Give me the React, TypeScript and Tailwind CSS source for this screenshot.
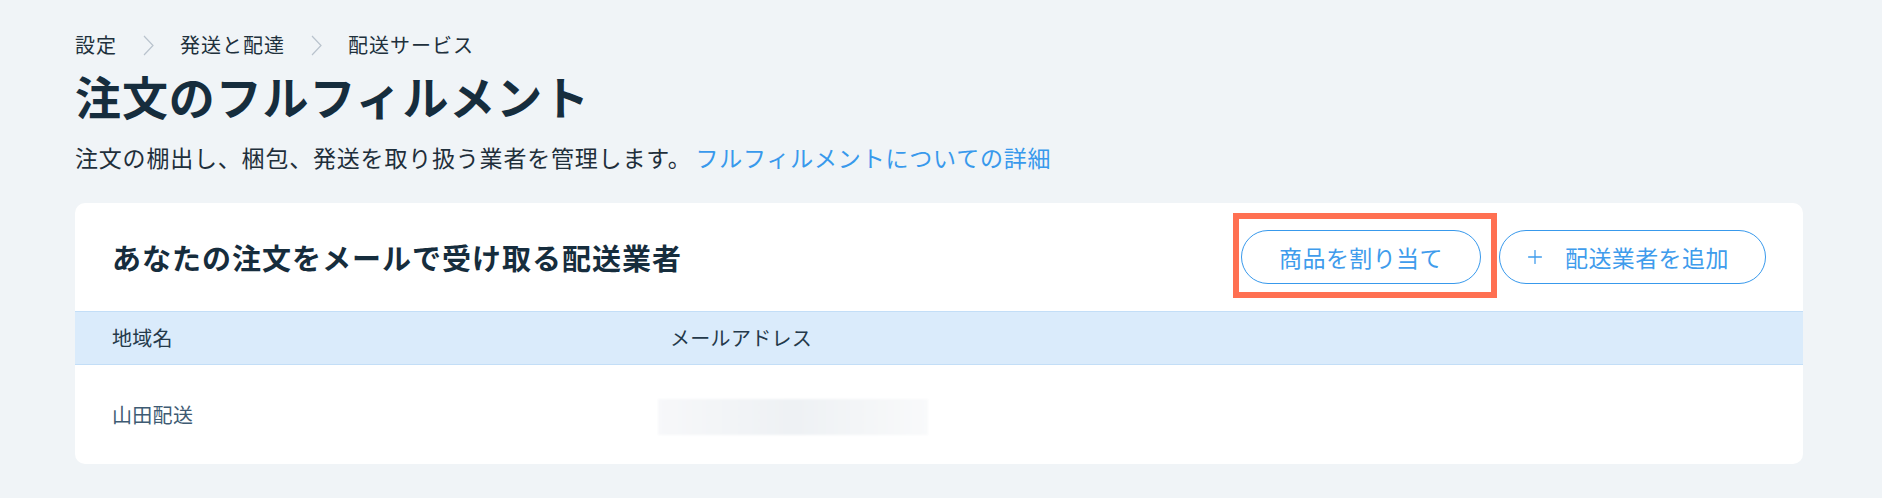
import { Plus } from "lucide-react"

const crumbs = ["設定", "発送と配達", "配送サービス"]

function Chevron() {
  return (
    <svg width="11" height="21" viewBox="0 0 11 21" className="mx-[26px] shrink-0">
      <polyline points="1,1 10,10.5 1,20" fill="none" stroke="#b9c3cd" strokeWidth="1.2" />
    </svg>
  )
}

export default function App() {
  return (
    <div className="min-h-screen w-full bg-[#f0f4f7] font-['Noto_Sans_CJK_JP','Noto_Sans',sans-serif] text-[#162d3d]">
      <div className="pl-[75px] pr-[79px] pt-[31px] pb-[33px]">
        {/* Breadcrumbs */}
        <nav className="flex items-center h-[28px] text-[20px] leading-[28px] tracking-[1px] text-[#20303c]">
          {crumbs.map((c, i) => (
            <div key={c} className="flex items-center">
              {i > 0 && <Chevron />}
              <span>{c}</span>
            </div>
          ))}
        </nav>

        {/* Page header */}
        <h1 className="mt-[8px] text-[46px] leading-[56px] tracking-[0.9px] font-bold text-[#162d3d]">注文のフルフィルメント</h1>
        <p className="mt-[18px] text-[23px] leading-[32px] tracking-[0.8px] text-[#1f2f3b]">
          注文の棚出し、梱包、発送を取り扱う業者を管理します。
          <a className="ml-[4px] text-[#3899ec]">フルフィルメントについての詳細</a>
        </p>

        {/* Card */}
        <div className="mt-[30px] w-[1728px] rounded-[10px] bg-white overflow-visible">
          <div className="flex h-[108px] items-center justify-between px-[37px]">
            <h2 className="text-[29px] leading-[36px] tracking-[1px] font-bold text-[#162d3d]">あなたの注文をメールで受け取る配送業者</h2>
            <div className="flex items-center gap-[18px]">
              <div className="relative">
                <button className="flex h-[54px] w-[240px] items-center justify-center rounded-full border border-[#3899ec] bg-white text-[23px] tracking-[0.4px] text-[#3f9cec]">
                  商品を割り当て
                </button>
                <span className="pointer-events-none absolute -left-[8px] -top-[17px] h-[85px] w-[264px] border-[6px] border-[#ff7052]" />
              </div>
              <button className="flex h-[54px] w-[267px] items-center gap-[19px] rounded-full border border-[#3899ec] bg-white pl-[24px] text-[23px] tracking-[0.4px] text-[#3f9cec]">
                <Plus className="h-[22px] w-[22px]" strokeWidth={1.4} />
                <span>配送業者を追加</span>
              </button>
            </div>
          </div>

          {/* Table header */}
          <div className="flex h-[54px] items-center border-y border-[#c3def7] bg-[#daebfb] px-[37px] text-[20px] tracking-[0.3px] text-[#24394a]">
            <div className="w-[558px]">地域名</div>
            <div>メールアドレス</div>
          </div>

          {/* Row */}
          <div className="flex h-[99px] items-center px-[37px] text-[20px] tracking-[0.3px] text-[#3e5b73]">
            <div className="w-[558px]">山田配送</div>
            <div className="-ml-[12px] mt-[5px] h-[36px] w-[270px] bg-linear-to-r from-[#f7f8fa] via-[#eef1f4] to-[#f9fafb] blur-[1px]" />
          </div>
        </div>
      </div>
    </div>
  )
}
